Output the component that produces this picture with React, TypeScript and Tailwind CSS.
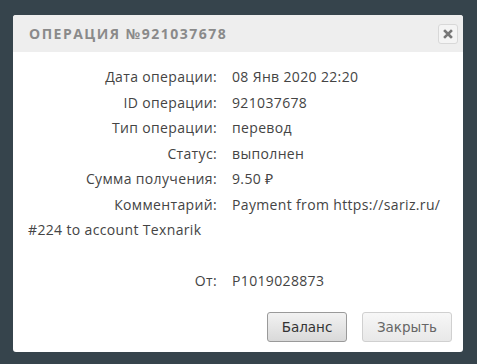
export default function App() {
  return (
    <div className="w-[477px] h-[364px] bg-[#36444c] pt-[15px] pl-[13px]" style={{ fontFamily: '"Open Sans", sans-serif' }}>
      <div className="w-[450px] h-[337px] bg-white rounded-[3px] flex flex-col">
        {/* шапка */}
        <div className="h-[37px] bg-[#eeeeee] rounded-t-[3px] flex items-center justify-between pl-4 pr-[5px]">
          <span className="text-[14px] font-bold tracking-[1.5px] text-[#8a8a8a]">ОПЕРАЦИЯ №921037678</span>
          <button className="w-5 h-5 rounded-[3px] border border-[#d8d8d8] bg-[#f4f4f4] flex items-center justify-center">
            <svg width="10" height="10" viewBox="0 0 10 10">
              <path d="M2 2 L8 8 M8 2 L2 8" stroke="#777" strokeWidth="2.6" strokeLinecap="square" />
            </svg>
          </button>
        </div>

        {/* тело */}
        <div className="px-[15px] pt-[12px] text-[14px] leading-[25.5px] tracking-[0.35px] text-[#444]">
          <div><span className="inline-block w-[189px] text-right mr-[15px]">Дата операции:</span>08 Янв 2020 22:20</div>
          <div><span className="inline-block w-[189px] text-right mr-[15px]">ID операции:</span>921037678</div>
          <div><span className="inline-block w-[189px] text-right mr-[15px]">Тип операции:</span>перевод</div>
          <div><span className="inline-block w-[189px] text-right mr-[15px]">Статус:</span>выполнен</div>
          <div><span className="inline-block w-[189px] text-right mr-[15px]">Сумма получения:</span>9.50 ₽</div>
          <div><span className="inline-block w-[189px] text-right mr-[15px]">Комментарий:</span>Payment from https://sariz.ru/ #224 to account Texnarik</div>
          <div className="h-[25.5px]"></div>
          <div><span className="inline-block w-[189px] text-right mr-[15px]">От:</span>P1019028873</div>
        </div>

        {/* кнопки */}
        <div className="mt-auto mb-[10px] flex justify-end gap-[15px] pr-[11px]" style={{ fontFamily: '"DejaVu Sans", sans-serif' }}>
          <button className="w-[80px] h-[30px] rounded-[3px] border border-[#9a9a9a] bg-gradient-to-b from-[#f2f2f2] to-[#d9d9d9] text-[13.5px] text-[#333]">Баланс</button>
          <button className="w-[90px] h-[30px] rounded-[3px] border border-[#d0d0d0] bg-gradient-to-b from-[#f7f7f7] to-[#e8e8e8] text-[13.5px] text-[#666]">Закрыть</button>
        </div>
      </div>
    </div>
  );
}
